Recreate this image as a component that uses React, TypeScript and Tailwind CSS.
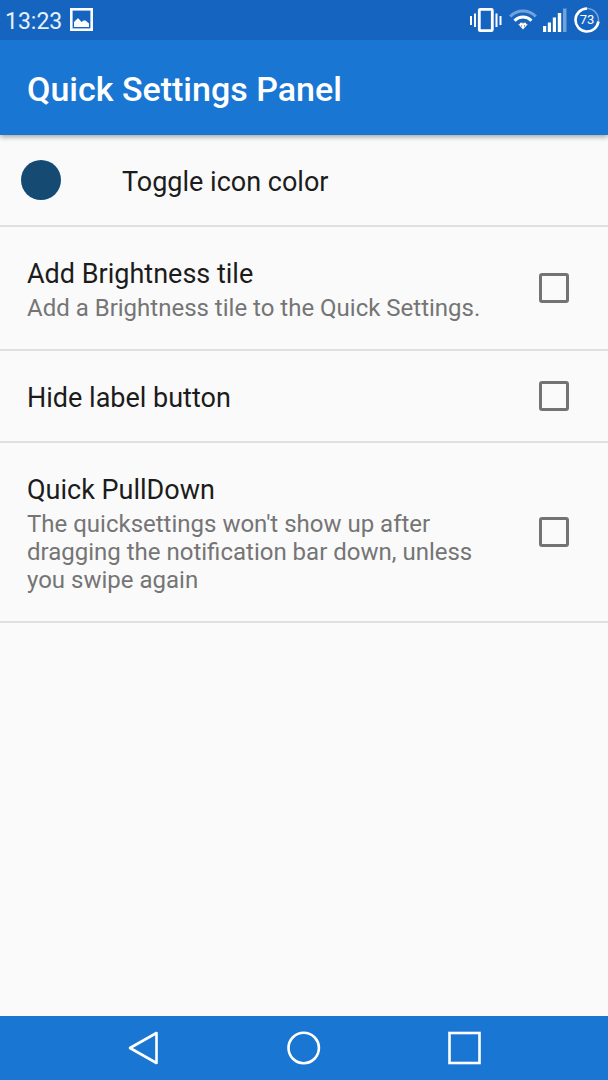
const settings = [
  {
    id: "brightness",
    title: "Add Brightness tile",
    summary: "Add a Brightness tile to the Quick Settings.",
  },
  { id: "hide-label", title: "Hide label button" },
  {
    id: "pulldown",
    title: "Quick PullDown",
    summary:
      "The quicksettings won't show up after dragging the notification bar down, unless you swipe again",
  },
];

function StatusBar() {
  return (
    <div className="relative z-10 flex h-10 items-center justify-between bg-[#1565c0] pr-2 pl-[5px] text-white">
      <div className="flex items-center gap-2">
        <span className="pt-1 text-[23px] leading-7 text-[#e8f0f9]">13:23</span>
        <svg width="24" height="24" viewBox="0 0 24 24" aria-hidden="true">
          <rect x="1.3" y="1.3" width="20.4" height="20.4" fill="none" stroke="#fff" strokeWidth="2.6" />
          <path d="M4 19v-5l3.5-3.5h1L11.500 14l2-1.500h2L19 15.500V19z" fill="#fff" />
        </svg>
      </div>
      <div className="flex items-center gap-1.5">
        {/* Vibrate */}
        <svg width="34" height="26" viewBox="0 0 34 26" aria-hidden="true">
          <rect x="10.300" y="2.300" width="13" height="21.400" rx="1" fill="none" stroke="#fff" strokeWidth="2.800" />
          <path d="M6 6.500v13.500M27.500 6.500v13.500M2 9v9M31.500 9v9" stroke="#fff" strokeWidth="2" />
        </svg>
        {/* Wi-Fi */}
        <svg width="28" height="22" viewBox="0 0 28 22" fill="none" aria-hidden="true">
          <path d="M1.200 7.500C8.500.2 19.500.2 26.800 7.500" stroke="#fff" strokeOpacity=".4" strokeWidth="3" />
          <path d="M5.500 11.700c5-4.800 12-4.800 17 0" stroke="#fff" strokeWidth="3" />
          <path d="M9.300 15.200c2.800-2.600 6.600-2.600 9.400 0L14 20.500z" fill="#fff" />
          <path d="M9.500 14.700h1.500m1.500-1h3m1.500 1h1.500M12 17h1m2 0h1" stroke="#4a5560" strokeWidth="1" />
        </svg>
        {/* Signal */}
        <svg width="25" height="24" viewBox="0 0 25 24" fill="#fff" aria-hidden="true">
          <rect x="0" y="18" width="3.200" height="6" />
          <rect x="4.800" y="14.500" width="3.200" height="9.500" />
          <rect x="9.800" y="9.500" width="3.200" height="14.500" />
          <rect x="14.800" y="5" width="3.400" height="19" />
          <rect x="20" y="0.500" width="3.500" height="23.500" fillOpacity=".4" />
        </svg>
        {/* Battery */}
        <div className="relative flex size-[26px] items-center justify-center">
          <svg className="absolute inset-0" width="26" height="26" viewBox="0 0 26 26" fill="none" aria-hidden="true">
            <circle cx="13" cy="13" r="11.500" stroke="#fff" strokeOpacity=".4" strokeWidth="1.500" />
            <path d="M24.400 14.500A11.500 11.500 0 1 1 13 1.500" stroke="#fff" strokeWidth="2.600" />
          </svg>
          <span className="text-[13px] leading-4">73</span>
        </div>
      </div>
    </div>
  );
}

function NavBar() {
  const button = "flex items-center justify-center";
  return (
    <nav className="grid h-16 grid-cols-3 bg-[#1976d2] px-16">
      <button type="button" aria-label="Back" className={button}>
        <svg width="34" height="34" viewBox="0 0 34 34" fill="none" stroke="#fff" strokeWidth="2.600" strokeLinejoin="round">
          <path d="M29.500 2v30L3 17z" />
        </svg>
      </button>
      <button type="button" aria-label="Home" className={button}>
        <svg width="34" height="34" viewBox="0 0 34 34" fill="none" stroke="#fff" strokeWidth="2.600">
          <circle cx="16.700" cy="17" r="15.200" />
        </svg>
      </button>
      <button type="button" aria-label="Recent apps" className={button}>
        <svg width="34" height="34" viewBox="0 0 34 34" fill="none" stroke="#fff" strokeWidth="2.600">
          <rect x="2.500" y="2" width="30" height="30" />
        </svg>
      </button>
    </nav>
  );
}

export default function App() {
  return (
    <div className="flex min-h-screen flex-col bg-[#fafafa] font-[Roboto,sans-serif] text-[#1c1c1c]">
      <StatusBar />
      <header className="flex h-[95px] items-center bg-[#1976d2] px-[27px] pt-0.5 shadow-[0_2px_5px_rgba(0,0,0,0.35)]">
        <h1 className="text-[34px] leading-10 font-medium text-white">Quick Settings Panel</h1>
      </header>

      <main className="flex-1">
        <button
          type="button"
          className="flex w-full items-center border-b-2 border-[#e0e0e0] pl-[21px] text-left"
        >
          <span className="mr-[61px] size-10 shrink-0 rounded-full bg-[#154a73]" />
          <span className="pt-[31px] pb-[27px] text-[27px] leading-8">Toggle icon color</span>
        </button>

        {settings.map((item) => (
          <label
            key={item.id}
            htmlFor={item.id}
            className="flex items-center justify-between gap-10 border-b-2 border-[#e0e0e0] pr-[39px] pl-[27px]"
          >
            <span className="pt-[31px] pb-[27px]">
              <span className="block text-[27px] leading-8">{item.title}</span>
              {item.summary && (
                <span className="mt-1 block text-2xl leading-7 text-[#757575]">{item.summary}</span>
              )}
            </span>
            <input
              id={item.id}
              type="checkbox"
              className="size-[30px] shrink-0 appearance-none rounded-[3px] border-3 border-[#737373] checked:bg-[#1976d2]"
            />
          </label>
        ))}
      </main>

      <NavBar />
    </div>
  );
}
